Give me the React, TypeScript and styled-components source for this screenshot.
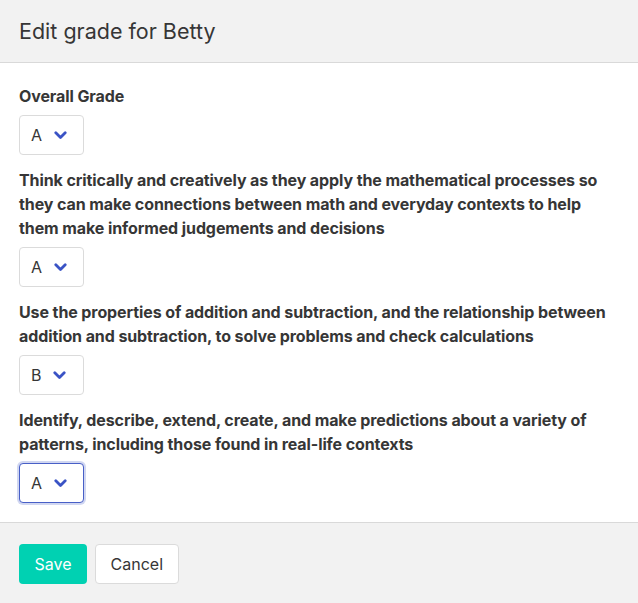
import React from "react";
import styled, { createGlobalStyle, css } from "styled-components";

const Global = createGlobalStyle`
  html, body { margin: 0; padding: 0; background: #ffffff; }
  body { font-family: Inter, "Noto Sans", sans-serif; color: #363636; -webkit-font-smoothing: antialiased; }
  * { box-sizing: border-box; }
`;

const Card = styled.div`
  width: 638px;
  height: 603px;
  display: flex;
  flex-direction: column;
  background: #fff;
`;

const Head = styled.header`
  height: 63px;
  flex: none;
  display: flex;
  align-items: center;
  padding: 0 19px;
  background: #f2f2f2;
  border-bottom: 1px solid #d9d9d9;
`;

const Title = styled.h1`
  margin: 0;
  font-size: 21.5px;
  font-weight: 400;
  color: #363636;
  line-height: 26px;
`;

const Body = styled.section`
  flex: 1;
  padding: 21px 19px 19px;
  display: flex;
  flex-direction: column;
  gap: 13px;
`;

const Field = styled.div`
  display: flex;
  flex-direction: column;
  gap: 7px;
  align-items: flex-start;
`;

const Label = styled.label`
  font-size: 16px;
  font-weight: 700;
  line-height: 24px;
  letter-spacing: -0.1px;
  color: #363636;
`;

const SelectBox = styled.div<{ $focused?: boolean }>`
  width: 65px;
  height: 40px;
  border: 1px solid #dbdbdb;
  border-radius: 4px;
  display: flex;
  align-items: center;
  padding-left: 11px;
  gap: 12px;
  font-size: 16px;
  color: #363636;
  background: #fff;
  ${(p) =>
    p.$focused &&
    css`
      border-color: #485fc7;
      box-shadow: 0 0 0 2px rgba(72, 95, 199, 0.25);
    `}
`;

const Foot = styled.footer`
  height: 81px;
  flex: none;
  display: flex;
  align-items: flex-start;
  gap: 8px;
  padding: 21px 19px 0;
  background: #f2f2f2;
  border-top: 1px solid #d9d9d9;
`;

const Button = styled.button<{ $primary?: boolean }>`
  height: 40px;
  padding: 0 14.5px;
  border-radius: 4px;
  font-family: inherit;
  font-size: 16px;
  border: 1px solid ${(p) => (p.$primary ? "transparent" : "#dbdbdb")};
  background: ${(p) => (p.$primary ? "#00d1b2" : "#fff")};
  color: ${(p) => (p.$primary ? "#fff" : "#363636")};
  cursor: pointer;
`;

const Chevron = () => (
  <svg width="13" height="9" viewBox="0 0 13 9" fill="none">
    <path d="M1.8 1.8 L6.5 6.5 L11.2 1.8" stroke="#3a53c5" strokeWidth="2.8" strokeLinecap="round" strokeLinejoin="round" />
  </svg>
);

const fields = [
  { label: "Overall Grade", value: "A" },
  {
    label:
      "Think critically and creatively as they apply the mathematical processes so they can make connections between math and everyday contexts to help them make informed judgements and decisions",
    value: "A",
  },
  {
    label:
      "Use the properties of addition and subtraction, and the relationship between addition and subtraction, to solve problems and check calculations",
    value: "B",
  },
  {
    label:
      "Identify, describe, extend, create, and make predictions about a variety of patterns, including those found in real-life contexts",
    value: "A",
    focused: true,
  },
];

export default function App() {
  return (
    <>
      <Global />
      <Card>
        <Head>
          <Title>Edit grade for Betty</Title>
        </Head>
        <Body>
          {fields.map((f, i) => (
            <Field key={i}>
              <Label>{f.label}</Label>
              <SelectBox $focused={f.focused}>
                <span>{f.value}</span>
                <Chevron />
              </SelectBox>
            </Field>
          ))}
        </Body>
        <Foot>
          <Button $primary>Save</Button>
          <Button>Cancel</Button>
        </Foot>
      </Card>
    </>
  );
}
